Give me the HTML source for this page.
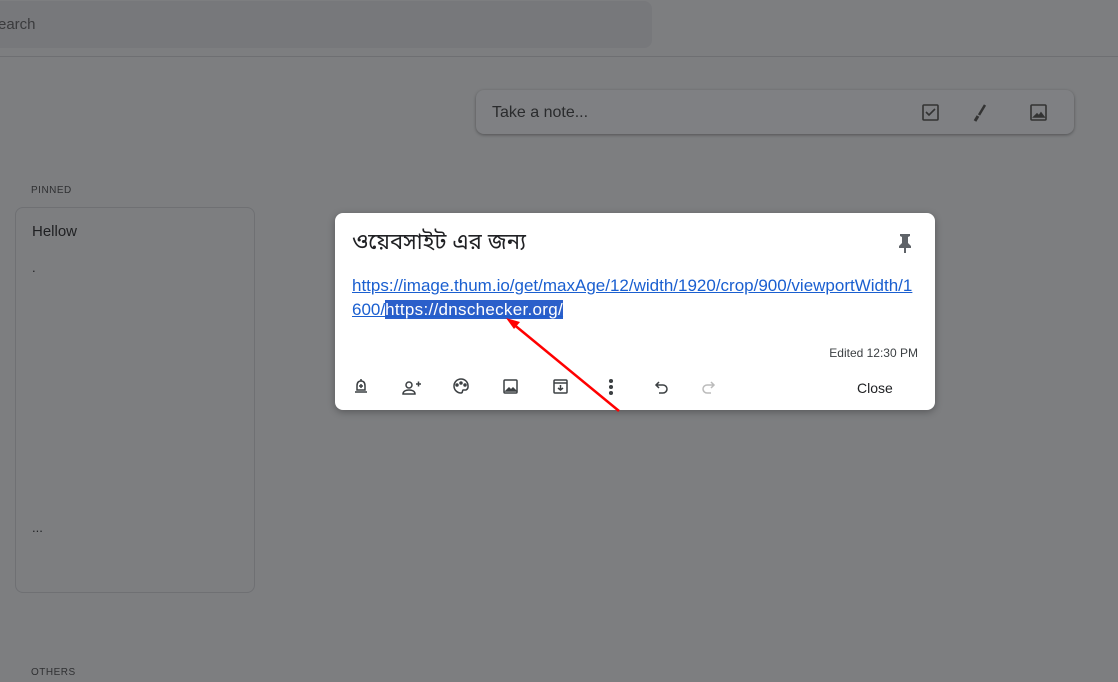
<!DOCTYPE html>
<html><head><meta charset="utf-8"><style>
body{margin:0;width:1118px;height:682px;background:#7d7e80;font-family:"Liberation Sans",sans-serif;position:relative;overflow:hidden;color:#202124}
.abs{position:absolute}
.search{left:-20px;top:1px;width:672px;height:47px;background:#77787b;border-radius:8px}
.line{left:0;top:56px;width:1118px;height:1px;background:#6e6f72}
.take{left:476px;top:90px;width:598px;height:44px;background:#7f8083;border-radius:8px;box-shadow:0 1px 3px rgba(0,0,0,.35)}
.card{left:15px;top:207px;width:238px;height:384px;border:1px solid #6f7073;border-radius:8px}
.modal{left:335px;top:213px;width:600px;height:197px;background:#fff;border-radius:8px;box-shadow:0 2px 8px rgba(0,0,0,.3)}
a{color:#1a5fd0;text-decoration:underline}
.sel{background:#2b5fca;color:#fff}
</style></head><body>
<div class="abs search"></div>
<div class="abs" style="left:-2px;top:16px;font-size:15px;color:#3a3b3d">earch</div>
<div class="abs line"></div>
<div class="abs take"></div>
<div class="abs" style="left:492px;top:104px;font-size:16px;color:#2a2b2d">Take a note...</div>
<svg class="abs" style="left:920px;top:102px" width="130" height="22" fill="none" stroke="#333" stroke-width="1.6">
<rect x="3" y="3" width="15" height="15" rx="1"/><path d="M6 10l3 3 6-6"/>
<path d="M65 3l-6 10" stroke-width="2.5"/><path d="M58 14l-3 5" stroke-width="3"/>
<rect x="111" y="3" width="15" height="15" rx="1"/><path d="M114 15l3-3 2 2 2-3 3 4z" fill="#333"/>
</svg>
<div class="abs" style="left:31px;top:185px;font-size:10px;letter-spacing:.5px;color:#2f3032">PINNED</div>
<div class="abs card"></div>
<div class="abs" style="left:32px;top:223px;font-size:15px;color:#1f2022">Hellow</div>
<div class="abs" style="left:32px;top:260px;font-size:13px">.</div>
<div class="abs" style="left:32px;top:520px;font-size:13px">...</div>
<div class="abs" style="left:31px;top:667px;font-size:10px;letter-spacing:.5px;color:#2f3032">OTHERS</div>
<div class="abs modal">
<div class="abs" style="left:17px;top:16px;font-size:22px;font-family:'Liberation Sans','Noto Sans Bengali','Lohit Bengali',sans-serif">ওয়েবসাইট এর জন্য</div>
<svg class="abs" style="left:560px;top:19px" width="20" height="22"><path d="M5 2h10v2l-2 1v6l3 3v2h-5v5h-2v-5H4v-2l3-3V5L5 4z" fill="#5f6368"/></svg>
<div class="abs" style="left:17px;top:61px;width:580px;font-size:17px;line-height:24px;white-space:nowrap"><a>https://image.thum.io/get/maxAge/12/width/1920/crop/900/viewportWidth/1<br>600/<span class="sel" style="letter-spacing:.3px">https://dnschecker.org/</span></a></div>
<div class="abs" style="right:17px;top:133px;font-size:12px;color:#3c4043">Edited 12:30 PM</div>
<svg class="abs" style="left:0;top:160px" width="400" height="30" fill="none" stroke="#3c4043" stroke-width="1.5">
<path d="M26 8c-3 0-4 2-4 5v4h8v-4c0-3-1-5-4-5zM20 19h12M26 6v2M26 11v4M24 13h4"/>
<circle cx="74" cy="12" r="3"/><path d="M68 21c0-3 3-4 6-4s6 1 6 4zM81 11h5M83.5 8.5v5"/>
<path d="M126 6a7 7 0 1 0 0 14c2 0 1-2 2-3h3a4 4 0 0 0 2-4c0-4-3-7-7-7z"/><circle cx="122" cy="12" r="1" fill="#3c4043"/><circle cx="126" cy="10" r="1" fill="#3c4043"/><circle cx="130" cy="12" r="1" fill="#3c4043"/>
<rect x="169" y="7" width="13" height="13" rx="1"/><path d="M171 18l3-3 2 2 2-2 3 3z" fill="#3c4043"/>
<rect x="219" y="7" width="13" height="13" rx="1"/><path d="M219 10h13M225.5 12v5M223 15l2.5 2 2.5-2"/>
<circle cx="276" cy="8" r="1.3" fill="#3c4043"/><circle cx="276" cy="14" r="1.3" fill="#3c4043"/><circle cx="276" cy="20" r="1.3" fill="#3c4043"/>
<path d="M321 12h7a4 4 0 0 1 0 8h-4M324 9l-3 3 3 3"/>
<path d="M379 12h-7a4 4 0 0 0 0 8h4M376 9l3 3-3 3" stroke="#bbb"/>
</svg>
<div class="abs" style="left:522px;top:167px;font-size:14px;color:#202124">Close</div>
</div>
<svg class="abs" style="left:0;top:0" width="1118" height="682"><path d="M619 411L512 323" stroke="#f00" stroke-width="2.5"/><path d="M506 318l14 4-6 7z" fill="#f00"/></svg>
</body></html>
